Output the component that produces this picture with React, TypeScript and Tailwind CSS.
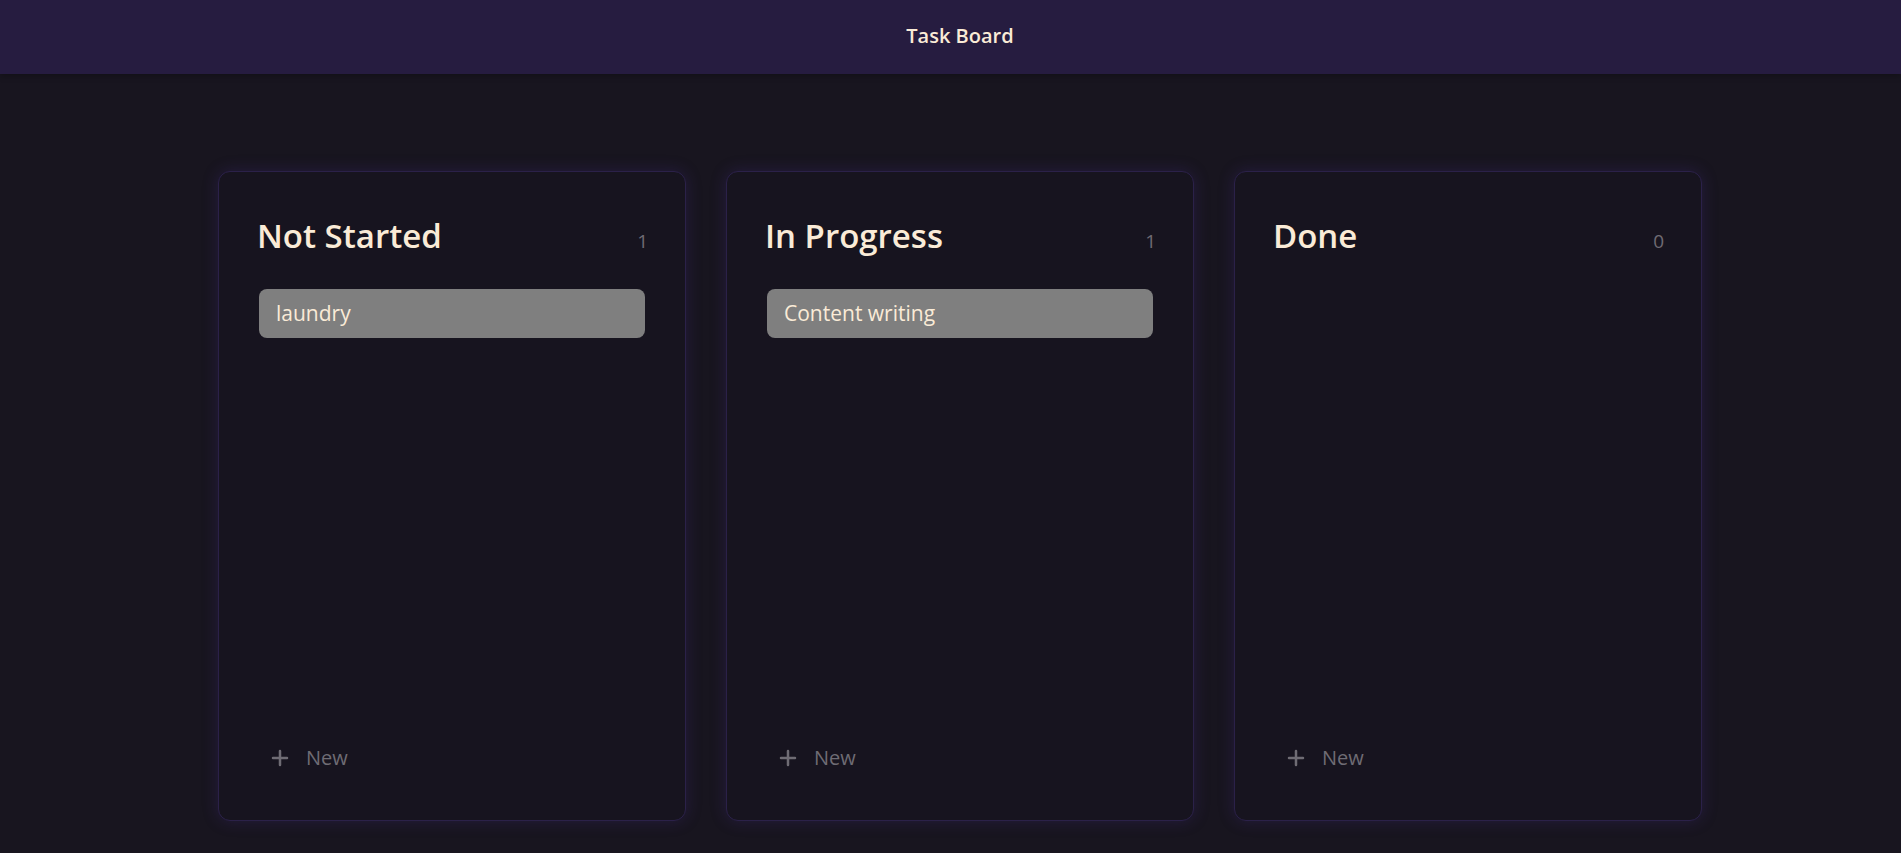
import { Plus } from 'lucide-react';

type Column = {
  title: string;
  tasks: string[];
};

const columns: Column[] = [
  { title: 'Not Started', tasks: ['laundry'] },
  { title: 'In Progress', tasks: ['Content writing'] },
  { title: 'Done', tasks: [] },
];

function BoardColumn({ column }: { column: Column }) {
  return (
    <div className="flex h-[650px] w-[468px] flex-col rounded-xl border border-[#2b2149] bg-[#17141f] px-10 shadow-[0_0_16px_rgba(70,45,140,0.3)]">
      <div className="flex items-baseline justify-between pt-[44px]">
        <h2 className="-ml-[2px] text-[33px] leading-[40px] font-semibold text-[#faebd7]">{column.title}</h2>
        <span className="-mr-[3px] text-[19px] text-[#6f6b73]">{column.tasks.length}</span>
      </div>
      <div className="mt-[33px] flex flex-col gap-3">
        {column.tasks.map((task) => (
          <div
            key={task}
            className="flex h-[49px] items-center rounded-lg bg-[#7f7f7f] px-[17px] text-[21px] text-[#faebd7]"
          >
            {task}
          </div>
        ))}
      </div>
      <button
        type="button"
        className="mt-auto mb-12 flex items-center gap-[14px] self-start pl-[9px] text-[20px] leading-7 text-[#6f6c74]"
      >
        <Plus size={24} strokeWidth={2.5} />
        New
      </button>
    </div>
  );
}

export default function App() {
  return (
    <div className="min-h-screen bg-[#18151f]" style={{ fontFamily: '"Open Sans", "Noto Sans", sans-serif' }}>
      <header className="flex h-[74px] items-center justify-center bg-[#261c40] pb-[2px] pl-[19px] shadow-[0_2px_6px_rgba(0,0,0,0.25)]">
        <h1 className="text-[20px] font-semibold text-[#faebd7]">Task Board</h1>
      </header>
      <main className="flex justify-center gap-10 pt-[97px] pl-[19px]">
        {columns.map((column) => (
          <BoardColumn key={column.title} column={column} />
        ))}
      </main>
    </div>
  );
}
